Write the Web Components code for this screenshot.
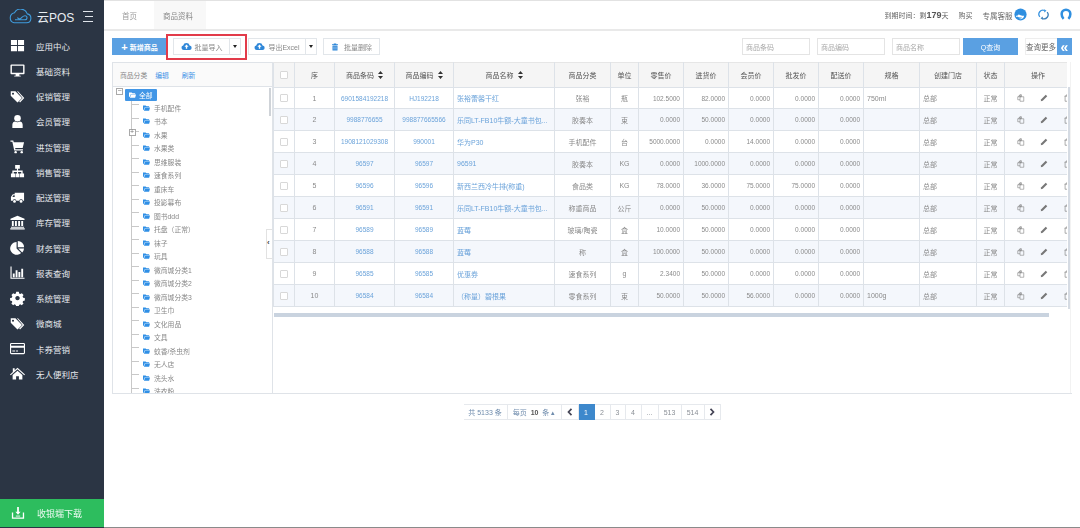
<!DOCTYPE html>
<html lang="zh">
<head>
<meta charset="utf-8">
<title>云POS</title>
<style>
  html, body { margin: 0; height: 100%; background: #fff; overflow: hidden; }
  body { font-family: "Liberation Sans", "Noto Sans CJK SC", sans-serif; color: #777; }
  pos-app { width: 1080px; height: 528px; }
</style>
</head>
<body>
<pos-app></pos-app>
<script>
(() => {
  const BLUE = '#5aa0e2';
  const LINK = '#6ba3da';
  const ICONS = {
    grid: '<path d="M1 2h6.500v5.500H1zM8.500 2H15v5.500H8.500zM1 8.500h6.500V14H1zM8.500 8.500H15V14H8.500z"/>',
    desktop: '<path fill-rule="evenodd" d="M1.500 1.500h13a1 1 0 0 1 1 1v8.500a1 1 0 0 1-1 1H10v1.500h1.500V14.500h-7v-1h1.500V12H1.500a1 1 0 0 1-1-1V2.500a1 1 0 0 1 1-1zM2 3v7.500h12V3z"/>',
    tags: '<path d="M.8 2.500h5l7 7-4.800 4.800-7.200-7zM3.200 4a1 1 0 1 0 .01 0z"/><path d="M7.500 2.500h1l6.700 7-4.500 4.800-.9-.9 3.700-3.900z"/>',
    user: '<circle cx="8" cy="4.500" r="3.500"/><path d="M2.500 15v-3.500c0-2.200 1.500-3.500 3-3.500 1.500 1 3.500 1 5 0 1.500 0 3 1.300 3 3.500V15z"/>',
    cart: '<path d="M.5 1.500h3l.5 2h11l-1.500 6H5.500l.3 1.300h8v1.400H4.500L2.500 3H.5z"/><circle cx="6" cy="14" r="1.300"/><circle cx="12.500" cy="14" r="1.300"/>',
    sitemap: '<path d="M5.500 1h5v4H8.600v2H13.500v3H15v4h-4.500v-4h1.500V8.500H8.600V10H10v4H6v-4h1.400V8.500H4V10h1.500v4H1v-4h1.500V7h4.900V5H5.500z"/>',
    truck: '<path d="M5 3h10v8.500h-1.200a2 2 0 0 0-3.900 0H6.800a2 2 0 0 0-3.900 0H1V7.500L3 4.500h2zM2.500 7.500H5V5.500H3.700z"/><circle cx="4.800" cy="12.200" r="1.500"/><circle cx="11.800" cy="12.200" r="1.500"/>',
    bank: '<path d="M8 .8l7.500 3.200v1.300H.5V4zM2 6.300h2v5.500H2zM5.300 6.300h2v5.500h-2zM8.700 6.300h2v5.500h-2zM12 6.300h2v5.500h-2zM1 12.500h14v1.200H1zM.3 14.200h15.400v1.300H.3z"/>',
    pie: '<path d="M7 2.200V9l4.800 4.800A6.800 6.800 0 1 1 7 2.200z"/><path d="M8.300 1a6.800 6.800 0 0 1 6.700 6.700H8.300zM8.800 9h6.200a6.800 6.800 0 0 1-2 4.200z"/>',
    bars: '<path d="M.5 1.500h1.200v12h13.800v1.200H.5zM3 9h2v4H3zM6 5.500h2V13H6zM9 7.500h2V13H9zM12 4h2v9h-2z"/>',
    gear: '<path fill-rule="evenodd" d="M6.500.8h3l.4 2 1.300.6 1.800-1.100 2 2.100-1.100 1.700.6 1.400 2 .4v3l-2 .4-.6 1.400 1.100 1.700-2.100 2-1.700-1.100-1.400.6-.4 2h-3l-.4-2-1.400-.6-1.700 1.100-2-2 1.100-1.800-.6-1.300-2-.4v-3l2-.4.6-1.400L1 4.400l2-2.100 1.800 1.100 1.300-.6zM8 5.600a2.500 2.500 0 1 0 .01 0z" transform="scale(.92) translate(.7 .2)"/>',
    card: '<path fill-rule="evenodd" d="M1.500 2h13A1.500 1.500 0 0 1 16 3.500v9a1.500 1.500 0 0 1-1.500 1.500h-13A1.500 1.500 0 0 1 0 12.500v-9A1.500 1.500 0 0 1 1.500 2zM1.200 3.300v1.800h13.600V3.300zm0 4v5.400h13.600V7.300zM2.500 10h3v1.200h-3zM6.500 10h2v1.200h-2z"/>',
    home: '<path d="M8 1.800L16 9l-.8.9L8 3.500.8 9.900 0 9l3-2.700V2.500h2v2zM2.800 9.500L8 5l5.200 4.500v5H9.500v-3.500h-3v3.500H2.800z"/>',
    download: '<path d="M7 1h2v5.500h2L8 10 5 6.500h2zM1 7.500h1.500V13h11V7.500H15V14.500H1z"/><path d="M5.500 11h5v1h-5z"/>',
    cloud: '<path fill-rule="evenodd" d="M12.500 6.500A3.200 3.200 0 0 1 12 13H4a3.300 3.300 0 0 1-.8-6.500A4.800 4.800 0 0 1 12.500 6.500zM8 5L5 8.300h2v3h2v-3h2z"/>',
    trash: '<path d="M5.500 1h5v1.500H14V4H2V2.500h3.500zM3 5h10v10H3z"/><path fill="#fff" d="M5.500 7h1v6h-1zM9.500 7h1v6h-1z"/>',
    copy: '<path fill="none" stroke="currentColor" stroke-width="1.100" d="M6 1.500L1.500 6v5.500H6M6 1.500h3v4H6zM6 1.500v4H1.500M9 5.500h4.500v9H6v-9z"/>',
    pencil: '<path d="M11.500 1.500l3 3-9 9-4 1 1-4z"/>',
    bin: '<path fill="none" stroke="currentColor" stroke-width="1.200" d="M3 4.500h10M6 4V2h4v2M4.200 4.500v10h7.600v-10"/>',
    person: '<path fill="none" stroke="currentColor" stroke-width="3.400" d="M4.800 14.500C3 12.800 2.200 10.500 2.200 8a5.800 5.800 0 0 1 11.600 0c0 2.500-.8 4.800-2.600 6.500"/>',
    refresh: '<path fill="none" stroke="currentColor" stroke-width="1.900" d="M2.700 11.500A6 6 0 0 1 9.800 2.200"/><path fill="none" stroke="#3c7fb8" stroke-width="1.900" d="M13.300 4.500A6 6 0 0 1 6.200 13.800"/><path d="M9 .2l3.400 2.500L9 5z"/><path fill="#3c7fb8" d="M7 15.800l-3.400-2.500L7 11z"/>',
    agent: '<circle cx="8" cy="8" r="7.500"/><path fill="#fff" d="M2.500 9.500c1.500 0 2.500-.5 3.500-1.800 1.200 1.200 3.500 2 6.500 1.900-.5 2.500-2.300 4.100-4.500 4.100-1 0-1.500-.2-2-.5 1.500.2 3-.3 4-1.500-2.500.2-5-.3-6-1.200-.4.300-1 .5-1.500.5z"/>',
  };
  const icon = (name, size, color = 'currentColor') => `<svg viewBox="0 0 16 16" width="${size}" height="${size}" fill="${color}" style="color:${color};display:block;flex:none">${ICONS[name]}</svg>`;

  class PosSidebar extends HTMLElement {
    constructor() {
      super();
      this.attachShadow({ mode: 'open' });
    }
    connectedCallback() {
      const items = [
        ['grid', '应用中心'], ['desktop', '基础资料'], ['tags', '促销管理'], ['user', '会员管理'],
        ['cart', '进货管理'], ['sitemap', '销售管理'], ['truck', '配送管理'], ['bank', '库存管理'],
        ['pie', '财务管理'], ['bars', '报表查询'], ['gear', '系统管理'], ['tags', '微商城'],
        ['card', '卡券营销'], ['home', '无人便利店'],
      ];
      this.shadowRoot.innerHTML = `
        <style>
          :host { display: flex; flex-direction: column; width: 104px; height: 528px; background: #2b3544; color: #e6e9ee; flex: none; }
          .logo { display: flex; align-items: center; height: 33px; padding-left: 8px; }
          .logo b { font: 400 12px "Liberation Sans", "Noto Sans CJK SC", sans-serif; margin-left: 4px; color: #e8edf2; width: 46px; }
          .menu { display: flex; flex-direction: column; flex: 1; }
          .item { display: flex; align-items: center; height: 25.250px; padding-left: 10px; font-size: 8.500px; }
          .item span { margin-left: 11px; }
          .down { display: flex; align-items: center; height: 28px; background: #2dbd5e; padding-left: 11px; font-size: 9px; color: #eafaf0; margin-bottom: 1px; }
          .down span { margin-left: 12px; }
          .burger { width: 10px; height: 9px; border-top: 1px solid #dfe4ea; border-bottom: 1px solid #dfe4ea; position: relative; }
          .burger::after { content: ''; position: absolute; left: 2px; right: 0; top: 3.500px; height: 1px; background: #dfe4ea; }
        </style>
        <div class="logo">
          <svg width="25" height="15" viewBox="0 0 25 15" fill="none" stroke="#3f9bdc" stroke-width="1.100"><path d="M6 13.800h12.500a4.500 4.500 0 0 0 .8-8.900A7 7 0 0 0 6.500 3.700 5.200 5.200 0 0 0 6 13.800z"/><path d="M7 10.800h10a2 2 0 0 0 0-4c-2 0-2.500 1.300-4 2.400-1.500 1.100-3 .6-3.500-.7"/></svg>
          <b>云POS</b>
          <div class="burger"></div>
        </div>
        <div class="menu">
          ${items.map(([i, t]) => `<div class="item">${icon(i, 15, '#fff')}<span>${t}</span></div>`).join('')}
        </div>
        <div class="down">${icon('download', 14, '#fff')}<span>收银端下载</span></div>
      `;
    }
  }

  class PosTopbar extends HTMLElement {
    constructor() {
      super();
      this.attachShadow({ mode: 'open' });
    }
    connectedCallback() {
      this.shadowRoot.innerHTML = `
        <style>
          :host { display: flex; align-items: stretch; height: 28px; border-top: 1px solid #e2e2e2; border-bottom: 2px solid #e9e9e9; font-size: 7.500px; color: #8b8b8b; flex: none; }
          .tab { display: flex; align-items: center; padding: 0 9px; }
          .first { margin-left: 10px; margin-right: 10px; color: #9a9a9a; width: 14px; padding: 0 8px; white-space: nowrap; }
          .on { background: #f8f8f8; width: 34px; color: #888; white-space: nowrap; }
          .right { margin-left: auto; display: flex; align-items: center; padding-right: 8px; color: #666; font-size: 7px; }
          .right b { font-size: 9px; color: #555; }
          .buy { margin-left: 10px; }
          .svc { margin-left: 10px; margin-right: 1px; font-size: 7.500px; }
          .a { margin-bottom: 2px; }
        </style>
        <div class="tab first">首页</div>
        <div class="tab on">商品资料</div>
        <div class="right">
          <span>到期时间：剩<b>179</b>天</span>
          <span class="buy">购买</span>
          <span class="svc">专属客服</span>
          <span class="a">${icon('agent', 13, '#2f8fe0')}</span>
          <span class="a" style="margin-left:11.500px">${icon('refresh', 11, '#3a94e0')}</span>
          <span class="a" style="margin-left:11px">${icon('person', 12, '#2f8fe0')}</span>
        </div>
      `;
    }
  }

  class PosToolbar extends HTMLElement {
    constructor() {
      super();
      this.attachShadow({ mode: 'open' });
    }
    connectedCallback() {
      this.shadowRoot.innerHTML = `
        <style>
          :host { display: flex; align-items: center; height: 31px; padding: 0 8px; font-size: 7px; color: #888; flex: none; box-sizing: border-box; }
          .btn { display: flex; align-items: center; justify-content: center; height: 17px; box-sizing: border-box; border: 1px solid #e2e6ea; background: #fff; }
          .add { width: 55px; background: ${BLUE}; border: 0; color: #fff; font-weight: 700; }
          .add i { font: 700 11px "Liberation Sans", sans-serif; margin-right: 2px; font-style: normal; }
          .mark { display: flex; align-items: center; box-sizing: border-box; width: 81px; height: 26px; margin-left: -1px; border: 2px solid #e23b4a; padding-left: 5px; }
          .split { display: flex; }
          .split .main { gap: 3px; }
          .caret { width: 11px; border-left: 0; }
          .caret::after { content: ''; border: 2.500px solid transparent; border-top: 3px solid #222; border-bottom: 0; }
          .imp { width: 57px; }
          .del { width: 57px; margin-left: 6px; gap: 5px; }
          .right { margin-left: auto; display: flex; align-items: center; }
          .in { width: 68px; height: 17px; box-sizing: border-box; border: 1px solid #e4e4e4; padding-left: 3px; display: flex; align-items: center; color: #aaa; margin-right: 7px; }
          .find { width: 55px; height: 17px; background: ${BLUE}; color: #fff; display: flex; align-items: center; justify-content: center; margin-left: -4px; }
          .more { display: flex; align-items: center; margin-left: 7px; height: 17px; font-size: 7.500px; color: #666; border: 1px solid #eee; border-right: 0; box-sizing: border-box; white-space: nowrap; }
          .more i { width: 15px; height: 17px; background: ${BLUE}; color: #fff; font: 700 14px "Liberation Sans", sans-serif; display: flex; align-items: center; justify-content: center; margin-left: 1px; }
        </style>
        <div class="btn add"><i>+</i>新增商品</div>
        <div class="mark">
          <div class="split">
            <div class="btn main imp">${icon('cloud', 11, '#2f87d8')}批量导入</div>
            <div class="btn caret"></div>
          </div>
        </div>
        <div class="split" style="margin-left:1px">
          <div class="btn main" style="width:58px">${icon('cloud', 11, '#2f87d8')}导出Excel</div>
          <div class="btn caret"></div>
        </div>
        <div class="btn del">${icon('trash', 8, '#2f87d8')}批量删除</div>
        <div class="right">
          <div class="in">商品条码</div>
          <div class="in">商品编码</div>
          <div class="in">商品名称</div>
          <div class="find">Q查询</div>
          <div class="more">查询更多<i>«</i></div>
        </div>
      `;
    }
  }

  class PosTree extends HTMLElement {
    constructor() {
      super();
      this.attachShadow({ mode: 'open' });
    }
    connectedCallback() {
      const names = ['手机配件', '书本', '水果', '水果类', '思维服装', '速食系列', '重床车', '投影幕布', '图书ddd', '托盘（正常）', '袜子', '玩具', '微商城分类1', '微商城分类2', '微商城分类3', '卫生巾', '文化用品', '文具', '蚊香/杀虫剂', '无人店', '洗头水', '洗衣粉'];
      const folder = (c) => `<svg width="7" height="6" viewBox="0 0 8 6" fill="${c}"><path d="M0 0h3l1 1h3v1H2L1 5H0z"/><path d="M2.500 2.500H8L7 6H1z"/></svg>`;
      this.shadowRoot.innerHTML = `
        <style>
          :host { display: flex; flex-direction: column; width: 160px; box-sizing: border-box; border: 1px solid #dfe3e8; border-right: 0; font-size: 6.800px; color: #888; flex: none; position: relative; }
          .head { display: flex; align-items: center; height: 24px; flex: none; padding-left: 7px; border-bottom: 1px solid #dfe3e8; background: #fafafa; box-sizing: border-box; }
          .head a { color: #3f93e6; margin-left: 8px; }
          .head a + a { margin-left: 13px; }
          .body { flex: 1; overflow: hidden; position: relative; padding-left: 12px; }
          .root { display: flex; align-items: center; height: 13px; margin-top: 1px; }
          .pill { display: flex; align-items: center; gap: 3px; width: 32px; height: 12px; background: #4196e6; color: #fff; box-sizing: border-box; padding-left: 4px; border-radius: 1px; }
          .box { position: absolute; width: 7px; height: 7px; box-sizing: border-box; border: 1px solid #a9a9a9; background: #fff; font: 7px/5px "Liberation Sans", sans-serif; text-align: center; color: #777; }
          .list { margin-left: 6px; border-left: 1px solid #c8c8c8; }
          .row { display: flex; align-items: center; height: 13.500px; position: relative; padding-left: 11px; gap: 4px; }
          .row::before { content: ''; position: absolute; left: 0; width: 7px; top: 3px; border-top: 1px solid #c8c8c8; }
          .bar { position: absolute; right: 1px; top: 1px; width: 2px; height: 28px; background: #cfd3d8; }
          .fold { position: absolute; right: 0; top: 142px; width: 5px; height: 28px; border: 1px solid #e2e2e2; border-right: 0; background: #fff; font: 700 8px/26px "Liberation Sans", sans-serif; color: #444; }
        </style>
        <div class="head">商品分类<a>编辑</a><a>刷新</a></div>
        <div class="body">
          <div class="box" style="left:3px;top:1px;line-height:4px">−</div>
          <div class="root"><div class="pill">${folder('#fff')}全部</div></div>
          <div class="list">
            ${names.map(n => `<div class="row">${folder('#2f8fe6')}<span>${n}</span></div>`).join('')}
          </div>
          <div class="box" style="left:15.500px;top:42px;line-height:4.500px">+</div>
          <div class="bar"></div>
          <div class="fold">‹</div>
        </div>
      `;
    }
  }

  class PosTable extends HTMLElement {
    constructor() {
      super();
      this.attachShadow({ mode: 'open' });
    }
    connectedCallback() {
      const widths = [21, 40, 60, 59, 101, 56, 28, 45, 45, 45, 45, 45, 56, 57, 28, 67];
      const heads = [
        ['', 0], ['序', 0], ['商品条码', 1], ['商品编码', 1], ['商品名称', 1], ['商品分类', 0], ['单位', 0], ['零售价', 0],
        ['进货价', 0], ['会员价', 0], ['批发价', 0], ['配送价', 0], ['规格', 0], ['创建门店', 0], ['状态', 0], ['操作', 0],
      ];
      const rows = [
        ['6901584192218', 'HJ192218', '张裕蕾馨干红', '张裕', '瓶', '102.5000', '82.0000', '0.0000', '0.0000', '0.0000', '750ml'],
        ['9988776655', '998877665566', '乐同LT-FB10牛额-大童书包...', '胶奏本', '束', '0.0000', '50.0000', '0.0000', '0.0000', '0.0000', ''],
        ['1908121029308', '990001', '华为P30', '手机配件', '台', '5000.0000', '0.0000', '14.0000', '0.0000', '0.0000', ''],
        ['96597', '96597', '96591', '胶奏本', 'KG', '0.0000', '1000.0000', '0.0000', '0.0000', '0.0000', ''],
        ['96596', '96596', '新西兰西冷牛排(称重)', '食品类', 'KG', '78.0000', '36.0000', '75.0000', '75.0000', '0.0000', ''],
        ['96591', '96591', '乐同LT-FB10牛额-大童书包...', '称重商品', '公斤', '0.0000', '50.0000', '0.0000', '0.0000', '0.0000', ''],
        ['96589', '96589', '蓝莓', '玻璃/陶瓷', '盒', '10.0000', '50.0000', '0.0000', '0.0000', '0.0000', ''],
        ['96588', '96588', '蓝莓', '称', '盒', '100.0000', '50.0000', '0.0000', '0.0000', '0.0000', ''],
        ['96585', '96585', '优惠券', '速食系列', 'g', '2.3400', '50.0000', '0.0000', '0.0000', '0.0000', ''],
        ['96584', '96584', '（称量）碧根果', '零食系列', '束', '50.0000', '50.0000', '56.0000', '0.0000', '0.0000', '1000g'],
      ];
      const sort = '<svg width="5" height="8" viewBox="0 0 5 8" fill="#333"><path d="M2.500 0L5 3H0zM2.500 8L0 5h5z"/></svg>';
      this.shadowRoot.innerHTML = `
        <style>
          :host { display: block; flex: 1; min-width: 0; position: relative; border-left: 1px solid #dfe3e8; border-bottom: 1px solid #dfe3e8; box-sizing: border-box; font-size: 7px; color: #8a8a8a; }
          .wrap { overflow: hidden; width: 794px; }
          table { border-collapse: collapse; table-layout: fixed; width: 798px; }
          th { height: 25px; background: #f5f5f5; font-weight: 400; color: #555; font-size: 7px; border: 1px solid #dde2e8; border-top: 1px solid #e6e6e6; padding: 0; box-sizing: border-box; }
          th div { display: flex; align-items: center; justify-content: center; gap: 4px; }
          td { height: 22px; padding: 0; border: 1px solid #dde2e8; box-sizing: border-box; text-align: center; white-space: nowrap; overflow: hidden; }
          tr:first-child td { height: 21px; }
          tr:nth-child(even) td { background: #f4f7fc; }
          td.num { text-align: right; padding-right: 3px; font-size: 6.500px; }
          td.link { color: ${LINK}; font-size: 6.500px; }
          td.name { color: ${LINK}; text-align: left; padding-left: 3px; font-size: 7px; }
          td.left { text-align: left; padding-left: 3px; }
          .chk { display: block; width: 6px; height: 6px; margin: auto; border: 1px solid #d8d8d8; border-radius: 1px; background: #fff; }
          .ops { display: flex; align-items: center; color: #777; padding-left: 12px; gap: 15px; }
          .vbar { position: absolute; left: 795px; top: 25px; width: 2px; height: 222px; background: #d5dbe3; }
          .hbar { position: absolute; left: 1px; top: 251px; width: 775px; height: 3.500px; background: #c9d3df; }
          .edge { position: absolute; left: 797px; top: 0; bottom: 0; border-left: 1px solid #f2f2f2; }
        </style>
        <div class="wrap">
          <table>
            <colgroup>${widths.map(w => `<col style="width:${w}px">`).join('')}</colgroup>
            <thead><tr>${heads.map(([t, s], i) => `<th><div>${i === 0 ? '<span class="chk"></span>' : t}${s ? sort : ''}</div></th>`).join('')}</tr></thead>
            <tbody>
              ${rows.map((r, i) => `<tr>
                <td><span class="chk"></span></td>
                <td>${i + 1}</td>
                <td class="link">${r[0]}</td>
                <td class="link">${r[1]}</td>
                <td class="name">${r[2]}</td>
                <td>${r[3]}</td>
                <td>${r[4]}</td>
                ${r.slice(5, 10).map(v => `<td class="num">${v}</td>`).join('')}
                <td class="left">${r[10]}</td>
                <td class="left">总部</td>
                <td>正常</td>
                <td><div class="ops">${icon('copy', 8)}${icon('pencil', 8)}${icon('bin', 8)}</div></td>
              </tr>`).join('')}
            </tbody>
          </table>
        </div>
        <div class="vbar"></div>
        <div class="hbar"></div>
        <div class="edge"></div>
      `;
    }
  }

  class PosPager extends HTMLElement {
    constructor() {
      super();
      this.attachShadow({ mode: 'open' });
    }
    connectedCallback() {
      const chevron = (d) => `<svg width="6" height="8" viewBox="0 0 6 8" fill="none" stroke="#445" stroke-width="1.700"><path d="${d}"/></svg>`;
      const cells = [
        ['共 5133 条', 44, 'info'], ['每页&nbsp;&nbsp;<b>10</b>&nbsp;&nbsp;条&nbsp;▴', 54, 'info'], [chevron('M4.500 .8L1.500 4l3 3.200'), 17], ['1', 16, 'cur'],
        ['2', 16], ['3', 15], ['4', 16], ['...', 17], ['513', 23], ['514', 23], [chevron('M1.500 .8L4.500 4l-3 3.200'), 16],
      ];
      this.shadowRoot.innerHTML = `
        <style>
          :host { display: flex; justify-content: center; padding-top: 10px; font-size: 7px; color: #8a8f96; flex: none; }
          .cell { display: flex; align-items: center; justify-content: center; height: 16px; box-sizing: border-box; border: 1px solid #e6e9ed; border-left: 0; white-space: nowrap; }
          .cell:first-child { border-left: 1px solid #e6e9ed; }
          .info { color: #6f8cad; }
          .info b { color: #555; }
          .cur { background: #3d88cc; border-color: #3d88cc; color: #fff; }
        </style>
        ${cells.map(([t, w, c]) => `<div class="cell ${c || ''}" style="width:${w}px">${t}</div>`).join('')}
      `;
    }
  }

  class PosApp extends HTMLElement {
    constructor() {
      super();
      this.attachShadow({ mode: 'open' });
    }
    connectedCallback() {
      this.shadowRoot.innerHTML = `
        <style>
          :host { display: flex; font-family: "Liberation Sans", "Noto Sans CJK SC", sans-serif; filter: blur(.3px); }
          .main { flex: 1; min-width: 0; display: flex; flex-direction: column; }
          .panels { display: flex; height: 332px; margin: 0 8px; flex: none; }
          .foot { flex: 1; border-bottom: 1px solid #8a8a8a; }
        </style>
        <pos-sidebar></pos-sidebar>
        <div class="main">
          <pos-topbar></pos-topbar>
          <pos-toolbar></pos-toolbar>
          <div class="panels">
            <pos-tree></pos-tree>
            <pos-table></pos-table>
          </div>
          <div class="foot"><pos-pager></pos-pager></div>
        </div>
      `;
    }
  }

  customElements.define('pos-sidebar', PosSidebar);
  customElements.define('pos-topbar', PosTopbar);
  customElements.define('pos-toolbar', PosToolbar);
  customElements.define('pos-tree', PosTree);
  customElements.define('pos-table', PosTable);
  customElements.define('pos-pager', PosPager);
  customElements.define('pos-app', PosApp);
})();
</script>
</body>
</html>
